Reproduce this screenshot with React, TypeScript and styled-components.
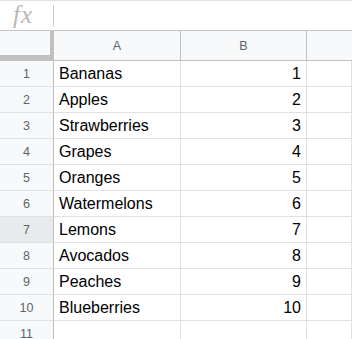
import styled, { createGlobalStyle } from "styled-components";

const GlobalStyle = createGlobalStyle`
  html, body {
    margin: 0;
    padding: 0;
    background: #ffffff;
    font-family: "Liberation Sans", Arial, sans-serif;
  }
  * {
    box-sizing: border-box;
  }
`;

// 시트 데이터
const fruits: [string, number][] = [
  ["Bananas", 1],
  ["Apples", 2],
  ["Strawberries", 3],
  ["Grapes", 4],
  ["Oranges", 5],
  ["Watermelons", 6],
  ["Lemons", 7],
  ["Avocados", 8],
  ["Peaches", 9],
  ["Blueberries", 10],
];

const activeRow = 7;

const App: React.FC = () => {
  return (
    <>
      <GlobalStyle />
      <Sheet>
        <FormulaBar>
          <Fx>fx</Fx>
          <Divider />
          <FormulaInput />
        </FormulaBar>
        <Grid>
          <Corner />
          <ColHeader>A</ColHeader>
          <ColHeader>B</ColHeader>
          <ColHeader $last />
          {fruits.map(([name, count], i) => (
            <Row key={name} num={i + 1} name={name} count={String(count)} />
          ))}
          <Row num={11} name="" count="" />
        </Grid>
      </Sheet>
    </>
  );
};
export default App;

interface RowProps {
  num: number;
  name: string;
  count: string;
}

const Row: React.FC<RowProps> = ({ num, name, count }) => (
  <>
    <RowHeader $active={num === activeRow}>{num}</RowHeader>
    <Cell>{name}</Cell>
    <Cell $align="right">{count}</Cell>
    <Cell />
  </>
);

const Sheet = styled.div`
  width: 352px;
  height: 339px;
  overflow: hidden;
  background: #ffffff;
`;

const FormulaBar = styled.div`
  display: flex;
  align-items: center;
  height: 31px;
  border-top: 1px solid #e1e1e1;
  border-bottom: 1px solid #c4c7c5;
  padding-left: 13px;
`;

const Fx = styled.span`
  font-family: "Liberation Serif", "Times New Roman", serif;
  font-style: italic;
  font-size: 25px;
  line-height: 1;
  color: #b7b7b7;
  width: 24px;
  margin-top: -2px;
  letter-spacing: 1px;
`;

const Divider = styled.div`
  width: 1px;
  height: 21px;
  margin-left: 16px;
  background: #c4c7c5;
`;

const FormulaInput = styled.div`
  flex: 1;
  height: 100%;
`;

const Grid = styled.div`
  display: grid;
  grid-template-columns: 54px 127px 126px 1fr;
  grid-template-rows: 30px;
  grid-auto-rows: 26px;
`;

const Corner = styled.div`
  background: #f8f9fa;
  border-right: 4px solid #c0c0c0;
  border-bottom: 6px solid #c0c0c0;
`;

const ColHeader = styled.div<{ $last?: boolean }>`
  display: flex;
  align-items: center;
  justify-content: center;
  background: #f8f9fa;
  border-right: ${(p) => (p.$last ? "none" : "1px solid #c0c0c0")};
  border-bottom: 1px solid #c0c0c0;
  font-size: 12.5px;
  color: #5f6368;
`;

const RowHeader = styled.div<{ $active?: boolean }>`
  display: flex;
  align-items: center;
  justify-content: center;
  background: ${(p) => (p.$active ? "#e8eaed" : "#f8f9fa")};
  border-right: 1px solid #c0c0c0;
  border-bottom: 1px solid #e1e1e1;
  font-size: 12.5px;
  color: #5f6368;
`;

const Cell = styled.div<{ $align?: "left" | "right" }>`
  display: flex;
  align-items: center;
  justify-content: ${(p) => (p.$align === "right" ? "flex-end" : "flex-start")};
  padding: 0 5px;
  border-right: 1px solid #e1e1e1;
  border-bottom: 1px solid #e1e1e1;
  font-size: 16px;
  color: #000000;
  white-space: nowrap;
  overflow: hidden;
`;
